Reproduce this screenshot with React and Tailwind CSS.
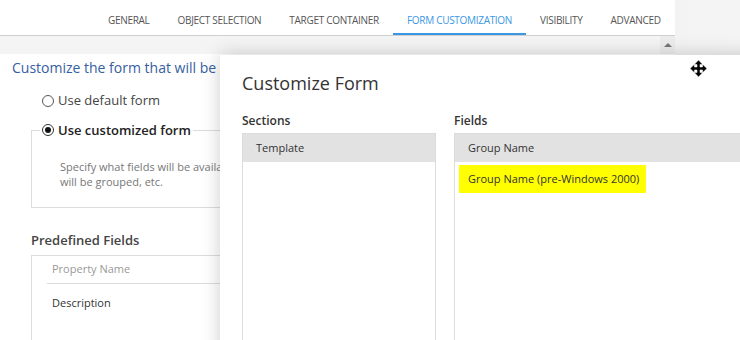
import React from 'react';

const TABS = ['GENERAL', 'OBJECT SELECTION', 'TARGET CONTAINER', 'FORM CUSTOMIZATION', 'VISIBILITY', 'ADVANCED'];

const MoveCursor = () => (
  <svg width="17" height="17" viewBox="0 0 16 16">
    <path d="M8 0 L12 4.2 H9.4 V6.6 H11.8 V4 L16 8 L11.8 12 V9.4 H9.4 V11.8 H12 L8 16 L4 11.8 H6.6 V9.4 H4.2 V12 L0 8 L4.2 4 V6.6 H6.6 V4.2 H4 Z" fill="#000" stroke="#fff" strokeWidth="0.5" />
  </svg>
);

const App = () => {
  return (
    <div className="relative w-[740px] h-[340px] overflow-hidden bg-gradient-to-r from-[#e6e6e6] to-[#f4f4f4] font-['Open_Sans',sans-serif]">
      <div className="w-[675px] h-full bg-white">
        <div className="flex h-[36px] border-b border-[#cfcfcf] pl-[94px]">
          {TABS.map((tab) => (
            <div
              key={tab}
              className={`px-[14px] flex items-end whitespace-nowrap text-[10px] tracking-[-0.3px] ${
                tab === 'FORM CUSTOMIZATION' ? 'pb-[5px] text-[#3b97e3] border-b-2 border-[#3b97e3]' : 'pb-[7px] text-[#555]'
              }`}
            >
              {tab}
            </div>
          ))}
        </div>
        <div className="h-[18px] bg-[#f4f4f4] flex justify-end">
          <div className="w-[15px] flex items-center justify-center bg-[#ececec]">
            <div className="w-0 h-0 border-l-[4px] border-r-[4px] border-b-[4px] border-l-transparent border-r-transparent border-b-[#777]" />
          </div>
        </div>
        <div className="pl-[12px] pt-[4px]">
          <div className="text-[14px] text-[#35609f] leading-[20px] whitespace-nowrap">Customize the form that will be used</div>
          <div className="pl-[30px] mt-[13px] flex items-center gap-[4px] text-[13px] text-[#444]">
            <span className="w-[12px] h-[12px] rounded-full border border-[#555]" />
            Use default form
          </div>
          <div className="ml-[19px] mt-[19px] border border-[#dcdcdc] h-[78px] w-[260px] relative">
            <div className="absolute -top-[10px] left-[8px] bg-white px-[2px] flex items-center gap-[4px] text-[13px] font-semibold text-[#222]">
              <span className="w-[12px] h-[12px] rounded-full border border-[#333] flex items-center justify-center">
                <span className="w-[6px] h-[6px] rounded-full bg-[#111]" />
              </span>
              Use customized form
            </div>
            <div className="pl-[28px] pt-[28px] text-[11px] leading-[15px] text-[#777] whitespace-nowrap">
              Specify what fields will be available in the form and how they
              <br />
              will be grouped, etc.
            </div>
          </div>
          <div className="ml-[19px] mt-[23px] text-[13px] font-semibold text-[#444]">Predefined Fields</div>
          <div className="ml-[19px] mt-[5px] border border-[#dcdcdc] w-[260px] h-[120px] pl-[15px]">
            <div className="h-[28px] flex items-center pl-[5px] text-[11px] text-[#999] border-b border-[#dcdcdc]">Property Name</div>
            <div className="h-[38px] flex items-center pl-[5px] text-[11px] text-[#333]">Description</div>
          </div>
        </div>
      </div>

      <div className="absolute left-[220px] top-[55px] w-[560px] h-[320px] bg-white shadow-[0_0_18px_rgba(0,0,0,0.2)] pl-[22px] pt-[15px]">
        <div className="text-[18px] text-[#333] leading-[26px]">Customize Form</div>
        <div className="flex gap-[18px] mt-[16px]">
          <div className="w-[194px]">
            <div className="text-[12px] font-semibold text-[#333] mb-[3px]">Sections</div>
            <div className="border border-[#dcdcdc] h-[220px]">
              <div className="h-[28px] bg-[#e2e2e2] flex items-center pl-[13px] text-[11px] text-[#333]">Template</div>
            </div>
          </div>
          <div className="flex-1">
            <div className="text-[12px] font-semibold text-[#333] mb-[3px]">Fields</div>
            <div className="border border-[#dcdcdc] h-[220px]">
              <div className="h-[28px] bg-[#e2e2e2] flex items-center pl-[13px] text-[11px] text-[#333]">Group Name</div>
              <div className="mt-[3px] ml-[4px] w-[187px] h-[28px] bg-[#ffff00] flex items-center pl-[9px] text-[11px] text-[#333]">
                Group Name (pre-Windows 2000)
              </div>
            </div>
          </div>
        </div>
      </div>

      <div className="absolute left-[690px] top-[60px]">
        <MoveCursor />
      </div>
    </div>
  );
};

export default App;
